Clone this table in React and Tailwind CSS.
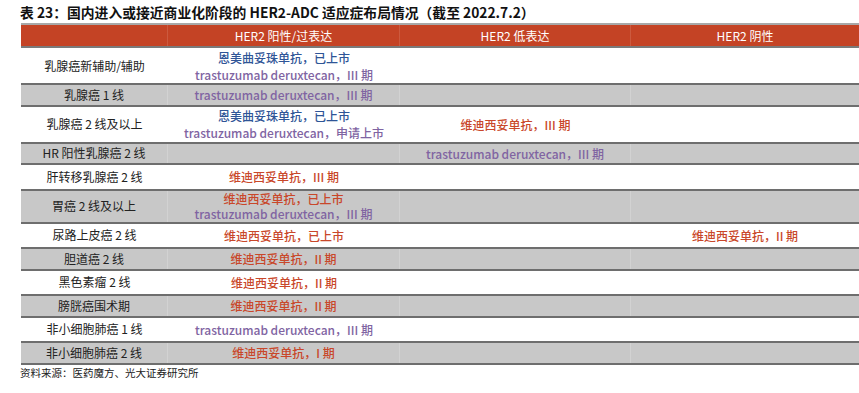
const BLUE = 'text-[#2f5597]';
const PURPLE = 'text-[#8064a2]';
const RED = 'text-[#c9472a]';

const rows = [
  { name: '乳腺癌新辅助/辅助', tall: true, c2: [['恩美曲妥珠单抗，已上市', BLUE], ['trastuzumab deruxtecan，III 期', PURPLE]] },
  { name: '乳腺癌 1 线', c2: [['trastuzumab deruxtecan，III 期', PURPLE]] },
  { name: '乳腺癌 2 线及以上', tall: true, c2: [['恩美曲妥珠单抗，已上市', BLUE], ['trastuzumab deruxtecan，申请上市', PURPLE]], c3: [['维迪西妥单抗，III 期', RED]] },
  { name: 'HR 阳性乳腺癌 2 线', c3: [['trastuzumab deruxtecan，III 期', PURPLE]] },
  { name: '肝转移乳腺癌 2 线', c2: [['维迪西妥单抗，III 期', RED]] },
  { name: '胃癌 2 线及以上', tall: true, c2: [['维迪西妥单抗，已上市', RED], ['trastuzumab deruxtecan，III 期', PURPLE]] },
  { name: '尿路上皮癌 2 线', c2: [['维迪西妥单抗，已上市', RED]], c4: [['维迪西妥单抗，II 期', RED]] },
  { name: '胆道癌 2 线', c2: [['维迪西妥单抗，II 期', RED]] },
  { name: '黑色素瘤 2 线', c2: [['维迪西妥单抗，II 期', RED]] },
  { name: '膀胱癌围术期', c2: [['维迪西妥单抗，II 期', RED]] },
  { name: '非小细胞肺癌 1 线', c2: [['trastuzumab deruxtecan，III 期', PURPLE]] },
  { name: '非小细胞肺癌 2 线', c2: [['维迪西妥单抗，I 期', RED]] },
];

function Cell({ lines, gray, last }) {
  return (
    <div
      className={`flex flex-col items-center justify-center font-medium ${
        gray ? 'leading-[15.5px]' : 'leading-[17px]'
      } ${gray && !last ? 'border-r border-[#d2d2d2]' : ''}`}
    >
      {(lines || []).map(([t, c], i) => (
        <span key={i} className={c}>
          {t}
        </span>
      ))}
    </div>
  );
}

export default function App() {
  return (
    <div
      className="w-[859px] h-[393px] bg-white text-[#222] overflow-hidden"
      style={{ fontFamily: '"Noto Sans CJK SC", "Noto Sans", sans-serif' }}
    >
      <div className="pl-[20px] pt-[3px] h-[23px] text-[13.8px] font-bold leading-[18px] text-[#111]">
        表 23：国内进入或接近商业化阶段的 HER2-ADC 适应症布局情况（截至 2022.7.2）
      </div>
      <div className="ml-[21px] text-[12px]">
        <div className="grid grid-cols-[147px_232px_231px_228px] h-[25px] bg-[#c44325] text-white border-t-2 border-b-2 border-t-[#a8a8a8] border-b-[#7a7a7a] leading-[21px]">
          <div className="border-r border-[#cc5a3f]"></div>
          <div className="text-center border-r border-[#cc5a3f]">HER2 阳性/过表达</div>
          <div className="text-center border-r border-[#cc5a3f]">HER2 低表达</div>
          <div className="text-center">HER2 阴性</div>
        </div>
        {rows.map((r, i) => {
          const gray = i % 2 === 1;
          return (
            <div
              key={i}
              className={`grid grid-cols-[147px_232px_231px_228px] ${r.tall ? 'h-[35px]' : 'h-[23.5px]'} ${
                gray ? 'bg-[#c8c8c8] border-t-2 border-b-2 border-[#6e6e6e]' : ''
              } ${i === rows.length - 1 ? 'border-b-2' : ''}`}
            >
              <div className={`flex items-center justify-center ${gray ? 'border-r border-[#d2d2d2]' : ''}`}>
                {r.name}
              </div>
              <Cell lines={r.c2} gray={gray} />
              <Cell lines={r.c3} gray={gray} />
              <Cell lines={r.c4} gray={gray} last />
            </div>
          );
        })}
      </div>
      <div className="pl-[20px] pt-[1px] text-[10.5px] leading-[14px] text-[#222]">资料来源：医药魔方、光大证券研究所</div>
    </div>
  );
}
